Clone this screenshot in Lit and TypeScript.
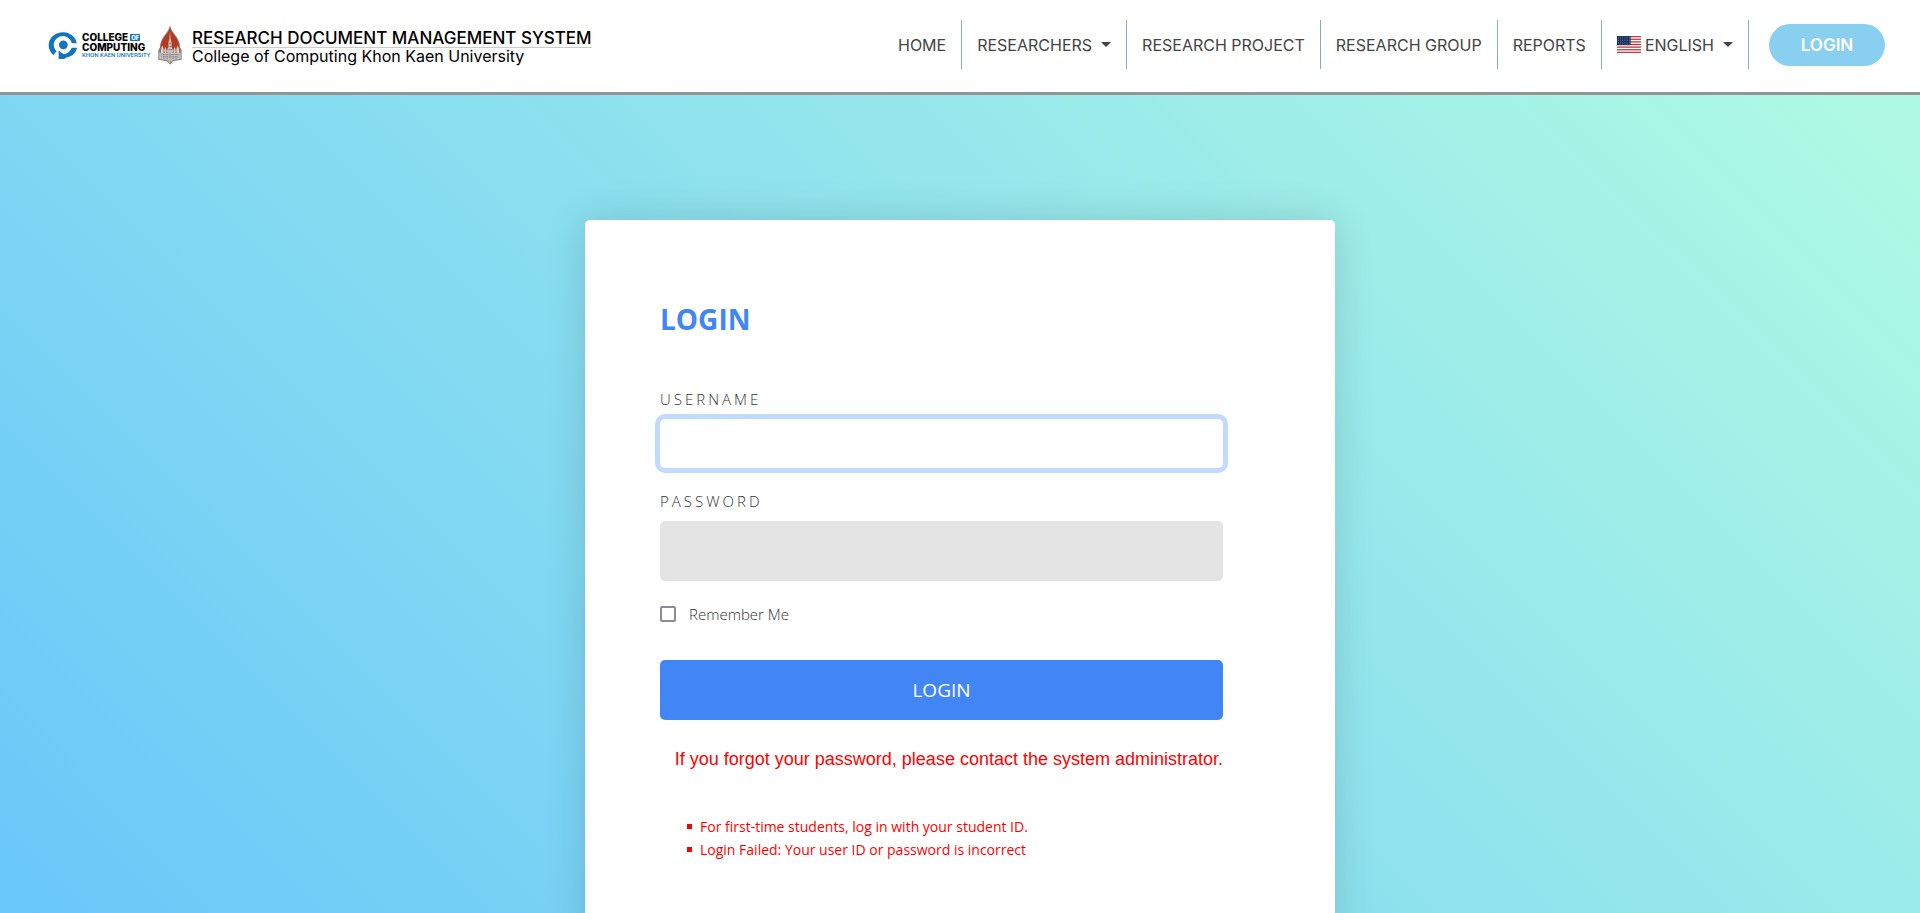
import { LitElement, html, css, svg } from "lit";
import { customElement, state } from "lit/decorators.js";

const caret = html`<span class="caret" aria-hidden="true"></span>`;

const stripes = [0, 2, 4, 6, 8, 10, 12];
const flag = html`<svg class="flag" viewBox="0 0 24 17" preserveAspectRatio="none" aria-hidden="true">
  <rect width="24" height="17" fill="#fff" />
  ${stripes.map((i) => svg`<rect y=${i * 17 / 13} width="24" height=${17 / 13} fill="#bd3d44" />`)}
  <rect width="13.6" height="9.15" fill="#192f5d" />
  ${[1.2, 2.9, 4.6, 6.3, 8].map((y) => svg`<path d=${`M1 ${y}H13`} stroke="#fff" stroke-width=".7" stroke-dasharray=".7 1.5" opacity=".6" />`)}
</svg>`;

const emblem = html`<svg class="emblem" viewBox="0 0 84 80" aria-hidden="true">
  <path d="M83 33A42 39 0 1 0 13 68L23 57A27 26 0 1 1 68 33Z" fill="#0f75bc" />
  <circle cx="43" cy="38" r="13" fill="#0f75bc" />
  <path d="M29 55L43 65Q60 66 68 47H84Q77 73 50 76L46 80H29Z" fill="#0f75bc" />
</svg>`;

const seal = html`<svg class="seal" viewBox="0 0 72 118" aria-hidden="true">
  <path d="M36 0Q39 15 50 27Q66 46 66 66L71 74V103L45 108L36 118L27 108L1 103V74L6 66Q6 46 22 27Q33 15 36 0Z" fill="#8c8583" />
  <path d="M36 7Q40 21 49 30Q64 48 64 68V84H8V68Q8 48 23 30Q32 21 36 7Z" fill="#b5391f" />
  <path d="M36 18L38 40L41 52V66L46 74V84H26V74L31 66V52L34 40Z" fill="#c9c2bf" />
  <path d="M32 54H40M30 63H42M28 73H44" stroke="#77706e" stroke-width="2" />
  <path d="M13 60L17 72V88H9V72ZM59 60L63 72V88H55V72ZM22 64L25 74V88H19V74ZM50 64L53 74V88H47V74Z" fill="#d8d2cf" />
  <path d="M4 82H68V100L45 104L36 113L27 104L4 100Z" fill="#c6c1be" />
  <path d="M8 88H64M10 95H62M18 80V100M27 80V102M45 80V102M54 80V100M36 82V110" stroke="#7c7674" stroke-width="3" stroke-dasharray="3 3" />
</svg>`;

@customElement("app-root")
export class AppRoot extends LitElement {
  @state() private remember = false;

  static styles = css`
    :host { display: block; min-height: 100vh; background: #fff; color: #666; font-family: "Open Sans", sans-serif; }
    * { box-sizing: border-box; }
    .header { display: flex; align-items: flex-start; justify-content: space-between; padding: 20px 35px 20px 48px; height: 95px; background: #fff; border-bottom: 3px solid #949494; }
    .brand { display: flex; align-items: center; height: 50px; color: #000; text-decoration: none; }
    .emblem { width: 30px; height: 27px; flex: none; }
    .college { display: flex; flex-direction: column; margin: 0 9px 0 4px; width: 67px; font: 800 10px/10px Inter, sans-serif; white-space: nowrap; }
    .college-top { display: flex; align-items: center; gap: 2px; }
    .of { background: #0f75bc; color: #fff; font-size: 6px; line-height: 7px; padding: 0 1px; border-radius: 1px; }
    .uni { color: #0f75bc; font: 500 6px/6px Roboto, sans-serif; }
    .seal { width: 24px; height: 40px; flex: none; }
    .system { margin-left: 10px; padding-top: 2px; font-family: Inter, sans-serif; font-size: 16px; line-height: 16px; white-space: nowrap; }
    .system-name { display: block; border-bottom: 1px solid #ccc; font-size: 17px; line-height: 18px; font-weight: 500; }
    .system-org { display: block; }
    .nav { display: flex; align-items: center; white-space: nowrap; font-family: Inter, sans-serif; }
    .item { display: flex; align-items: center; height: 49px; padding: 0 15px; font-size: 16px; color: #444; text-decoration: none; border: 0; border-right: 1px solid #8fa9c2; background: none; font-family: inherit; cursor: pointer; }
    .caret { border: 5px solid transparent; border-top-color: #444; border-bottom: 0; margin-left: 9px; }
    .flag { width: 24px; height: 17px; margin-right: 4px; }
    .signin { display: flex; align-items: center; justify-content: center; margin-left: 20px; width: 116px; height: 42px; border-radius: 21px; background: #89cff0; color: #fff; font-size: 17px; font-weight: 600; text-decoration: none; }
    .main { min-height: calc(100vh - 95px); padding: 125px 20px 0; background: linear-gradient(45deg, #66c5fa, #b0fae3); overflow: hidden; }
    .card { width: 100%; max-width: 750px; margin: 0 auto; padding: 75px 112px 50px 75px; min-height: 800px; background: #fff; border-radius: 5px; box-shadow: 0 0 40px rgba(0, 0, 0, 0.14); }
    .title { margin: 0 0 46px; font-size: 28px; line-height: 48px; font-weight: 700; color: #4285f4; }
    .label { display: block; font-size: 15px; line-height: 20px; letter-spacing: 3px; margin-bottom: 10px; font-weight: 300; color: #333; }
    .field { display: block; width: 100%; height: 60px; padding: 0 20px; border: 0; border-radius: 5px; outline: 0; background: #e4e4e4; font: 16px "Open Sans", sans-serif; margin-bottom: 23px; }
    .field.active { height: 49px; background: #fff; box-shadow: 0 0 0 5px #c2daff; }
    .check { display: flex; align-items: center; gap: 13px; font-size: 15px; line-height: 20px; font-weight: 300; color: #333; margin-bottom: 36px; }
    .box { appearance: none; width: 16px; height: 16px; margin: 0; border: 2px solid #8d8a9b; border-radius: 2px; background: #fff; }
    .box:checked { background: #4285f4; }
    .submit { display: block; width: 100%; height: 60px; border: 0; border-radius: 5px; background: #4285f4; color: #fff; font: 19px "Open Sans", sans-serif; cursor: pointer; }
    .hint { margin: 27px 0 0; text-align: right; color: red; font: 18px/24px "Liberation Sans", Arial, sans-serif; white-space: nowrap; }
    .notes { margin: 44px 0 0; padding: 0 0 0 27px; list-style: none; color: red; font-size: 14px; line-height: 23px; }
    .note { display: flex; align-items: center; gap: 8px; }
    .note::before { content: ""; width: 5px; height: 5px; background: red; }
  `;

  private toggle(e: Event) {
    this.remember = (e.target as HTMLInputElement).checked;
  }

  render() {
    return html`
      <header class="header">
        <a class="brand" href="#">
          ${emblem}
          <span class="college">
            <span class="college-top">COLLEGE<span class="of">OF</span></span>
            <span>COMPUTING</span>
            <span class="uni">KHON KAEN UNIVERSITY</span>
          </span>
          ${seal}
          <span class="system">
            <span class="system-name">RESEARCH DOCUMENT MANAGEMENT SYSTEM</span>
            <span class="system-org">College of Computing Khon Kaen University</span>
          </span>
        </a>
        <nav class="nav">
          <a class="item" href="#">HOME</a>
          <button class="item" type="button">RESEARCHERS${caret}</button>
          <a class="item" href="#">RESEARCH PROJECT</a>
          <a class="item" href="#">RESEARCH GROUP</a>
          <a class="item" href="#">REPORTS</a>
          <button class="item" type="button">${flag}ENGLISH${caret}</button>
          <a class="signin" href="#">LOGIN</a>
        </nav>
      </header>
      <main class="main">
        <form class="card" @submit=${(e: Event) => e.preventDefault()}>
          <h1 class="title">LOGIN</h1>
          <label class="label" for="username">USERNAME</label>
          <input class="field active" id="username" type="text" autocomplete="username" />
          <label class="label" for="password">PASSWORD</label>
          <input class="field" id="password" type="password" autocomplete="current-password" />
          <label class="check"><input class="box" type="checkbox" .checked=${this.remember} @change=${this.toggle} />Remember Me</label>
          <button class="submit" type="submit">LOGIN</button>
          <p class="hint">If you forgot your password, please contact the system administrator.</p>
          <ul class="notes">
            <li class="note">For first-time students, log in with your student ID.</li>
            <li class="note">Login Failed: Your user ID or password is incorrect</li>
          </ul>
        </form>
      </main>
    `;
  }
}
